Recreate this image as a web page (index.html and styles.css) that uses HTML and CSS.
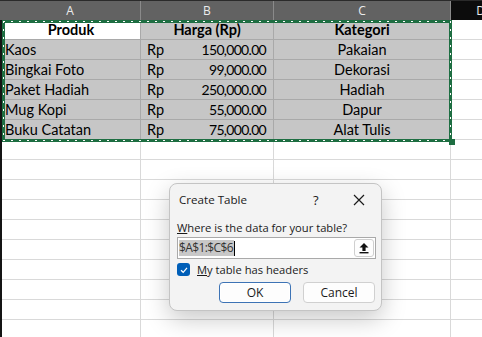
FILE: index.html
```html
<!DOCTYPE html>
<html>
<head>
	<title>Create Table</title>
	<link rel="stylesheet" href="styles.css">
</head>
<body>
	<div class="sheet">
		<div class="cols">
			<div class="colhead a">A</div>
			<div class="colhead b">B</div>
			<div class="colhead c">C</div>
			<div class="colhead d">D</div>
		</div>

		<div class="row">
			<div class="cell a active bold center">Produk</div>
			<div class="cell b sel bold center">Harga (Rp)</div>
			<div class="cell c sel bold center">Kategori</div>
			<div class="cell d"></div>
		</div>
		<div class="row">
			<div class="cell a sel">Kaos</div>
			<div class="cell b sel money"><span>Rp</span><span class="num">150,000.00</span></div>
			<div class="cell c sel center">Pakaian</div>
			<div class="cell d"></div>
		</div>
		<div class="row">
			<div class="cell a sel">Bingkai Foto</div>
			<div class="cell b sel money"><span>Rp</span><span class="num">99,000.00</span></div>
			<div class="cell c sel center">Dekorasi</div>
			<div class="cell d"></div>
		</div>
		<div class="row">
			<div class="cell a sel">Paket Hadiah</div>
			<div class="cell b sel money"><span>Rp</span><span class="num">250,000.00</span></div>
			<div class="cell c sel center">Hadiah</div>
			<div class="cell d"></div>
		</div>
		<div class="row">
			<div class="cell a sel">Mug Kopi</div>
			<div class="cell b sel money"><span>Rp</span><span class="num">55,000.00</span></div>
			<div class="cell c sel center">Dapur</div>
			<div class="cell d"></div>
		</div>
		<div class="row">
			<div class="cell a sel">Buku Catatan</div>
			<div class="cell b sel money"><span>Rp</span><span class="num">75,000.00</span></div>
			<div class="cell c sel center">Alat Tulis</div>
			<div class="cell d"></div>
		</div>

		<div class="row"><div class="cell a"></div><div class="cell b"></div><div class="cell c"></div><div class="cell d"></div></div>
		<div class="row"><div class="cell a"></div><div class="cell b"></div><div class="cell c"></div><div class="cell d"></div></div>
		<div class="row"><div class="cell a"></div><div class="cell b"></div><div class="cell c"></div><div class="cell d"></div></div>
		<div class="row"><div class="cell a"></div><div class="cell b"></div><div class="cell c"></div><div class="cell d"></div></div>
		<div class="row"><div class="cell a"></div><div class="cell b"></div><div class="cell c"></div><div class="cell d"></div></div>
		<div class="row"><div class="cell a"></div><div class="cell b"></div><div class="cell c"></div><div class="cell d"></div></div>
		<div class="row"><div class="cell a"></div><div class="cell b"></div><div class="cell c"></div><div class="cell d"></div></div>
		<div class="row"><div class="cell a"></div><div class="cell b"></div><div class="cell c"></div><div class="cell d"></div></div>
		<div class="row"><div class="cell a"></div><div class="cell b"></div><div class="cell c"></div><div class="cell d"></div></div>
		<div class="row"><div class="cell a"></div><div class="cell b"></div><div class="cell c"></div><div class="cell d"></div></div>

		<!-- copy marquee around A1:C6 -->
		<div class="marquee"><div class="handle"></div></div>

		<div class="dialog">
			<div class="dlg-title">
				<span class="dlg-name">Create Table</span>
				<span class="dlg-help">?</span>
				<svg class="dlg-close" width="12" height="12" viewBox="0 0 12 12">
					<path d="M1 1 L11 11 M11 1 L1 11" stroke="#1a1a1a" stroke-width="1.2" fill="none"/>
				</svg>
			</div>
			<div class="dlg-body">
				<div class="dlg-label"><u>W</u>here is the data for your table?</div>
				<div class="range">
					<div class="range-text"><span class="hl">$A$1:$C$6</span><span class="caret"></span></div>
					<div class="range-btn">
						<svg width="12" height="12" viewBox="0 0 12 12">
							<path d="M6 1 L10.5 5.5 L7.6 5.5 L7.6 9 L4.4 9 L4.4 5.5 L1.5 5.5 Z" fill="#111"/>
							<rect x="1.5" y="10" width="9" height="1.4" fill="#111"/>
						</svg>
					</div>
				</div>
				<div class="check-row">
					<span class="check">
						<svg width="10" height="10" viewBox="0 0 10 10">
							<path d="M2 5.2 L4.2 7.3 L8 2.8" stroke="#fff" stroke-width="1.2" fill="none"/>
						</svg>
					</span>
					<span><u>M</u>y table has headers</span>
				</div>
				<div class="buttons">
					<div class="btn ok">OK</div>
					<div class="btn">Cancel</div>
				</div>
			</div>
		</div>
	</div>
</body>
</html>
```

FILE: styles.css
```css
/* Spreadsheet in dark chrome with a Create Table dialog on top */
body {
	margin: 0;
	background: #ffffff;
	font-family: Lato, "Liberation Sans", sans-serif;
	overflow: hidden;
}

.sheet {
	position: relative;
	width: 482px;
	height: 337px;
}

.cols {
	display: flex;
	height: 20px;
	border-top: 1px solid #2a2a2a;
	box-sizing: border-box;
}

.colhead {
	display: flex;
	align-items: center;
	justify-content: center;
	background: #626262;
	color: #ececec;
	font-family: "Open Sans", "Liberation Sans", sans-serif;
	font-size: 12px;
	border-right: 1px solid #8a8a8a;
	box-sizing: border-box;
}

.colhead.a { width: 141px; }

.colhead.d {
	background: #0c0c0c;
	border-right: none;
	justify-content: flex-end;
	padding-right: 0;
	margin-right: -3px;
}

.a { width: 139px; flex: none; }
.b { width: 133px; flex: none; }
.c { width: 177px; flex: none; }
.d { flex: 1; }

.row {
	display: flex;
	height: 20px;
	border-left: 2px solid #141414;
}

.cell {
	height: 20px;
	box-sizing: border-box;
	border-right: 1px solid #d9d9d9;
	border-bottom: 1px solid #d9d9d9;
	font-size: 14.5px;
	line-height: 20px;
	padding: 0 3px;
	color: #000;
	white-space: nowrap;
	overflow: hidden;
}

.cell.d {
	border-right: none;
}

.cell.sel {
	background: #c6c6c6;
	border-color: #a9a9a9;
}

.cell.active {
	background: #ffffff;
	border-right-color: #a9a9a9;
	border-bottom-color: #a9a9a9;
}

.bold { font-weight: bold; }
.center { text-align: center; }

.money {
	display: flex;
	justify-content: space-between;
	padding: 0 7px 0 6px;
}

.num {
	font-size: 14px;
	letter-spacing: -0.7px;
}

.marquee {
	position: absolute;
	left: 2px;
	top: 20px;
	width: 450px;
	height: 122px;
	border: 3px solid #1e6e42;
	box-sizing: border-box;
}

.marquee::after {
	content: "";
	position: absolute;
	inset: -2px;
	background:
		repeating-linear-gradient(90deg, #ffffff 0 2px, transparent 2px 8px) top left / 100% 1px no-repeat,
		repeating-linear-gradient(90deg, #ffffff 0 2px, transparent 2px 8px) bottom left / 100% 1px no-repeat,
		repeating-linear-gradient(180deg, #ffffff 0 2px, transparent 2px 8px) top left / 1px 100% no-repeat,
		repeating-linear-gradient(180deg, #ffffff 0 2px, transparent 2px 8px) top right / 1px 100% no-repeat;
}

.handle {
	position: absolute;
	right: -6px;
	bottom: -6px;
	width: 6px;
	height: 6px;
	background: #1e6e42;
	z-index: 1;
}

/* dialog */
.dialog {
	position: absolute;
	left: 169px;
	top: 183px;
	width: 213px;
	height: 128px;
	background: #f3f3f3;
	border: 1px solid #c4c4c4;
	border-radius: 8px;
	box-sizing: border-box;
	box-shadow: 0 8px 24px rgba(0, 0, 0, 0.22);
	font-family: "Open Sans", "Noto Sans", sans-serif;
	font-size: 11.2px;
	color: #1a1a1a;
}

.dlg-title {
	display: flex;
	align-items: center;
	height: 31px;
	padding: 0 0 0 9px;
	font-size: 11.6px;
}

.dlg-name { flex: 1; }

.dlg-help {
	width: 31px;
	font-size: 13px;
}

.dlg-close {
	margin: 0 16px 0 9px;
}

.dlg-body {
	padding: 5px 5px 0 7px;
}

.dlg-label {
	height: 15px;
	line-height: 15px;
}

.range {
	display: flex;
	align-items: center;
	height: 22px;
	margin-top: 2px;
	background: #ffffff;
	border: 1px solid #a9a9a9;
	box-sizing: border-box;
}

.range-text {
	flex: 1;
	display: flex;
	align-items: center;
	padding-left: 1px;
}

.hl {
	background: #c8c8c8;
	color: #333;
	font-size: 12px;
	letter-spacing: -0.6px;
	line-height: 16px;
	padding-right: 1px;
}

.caret {
	width: 1px;
	height: 15px;
	background: #000;
}

.range-btn {
	display: flex;
	align-items: center;
	justify-content: center;
	width: 20px;
	height: 18px;
	margin-right: 1px;
	border: 1px solid #cfcfcf;
	border-radius: 3px;
	background: #fdfdfd;
	box-sizing: border-box;
}

.check-row {
	display: flex;
	align-items: center;
	gap: 7px;
	height: 15px;
	margin-top: 3px;
}

.check {
	display: flex;
	align-items: center;
	justify-content: center;
	width: 13px;
	height: 13px;
	border-radius: 3px;
	background: #005fb8;
}

.buttons {
	display: flex;
	justify-content: flex-end;
	gap: 12px;
	margin-top: 5px;
	padding-right: 1px;
}

.btn {
	width: 72px;
	height: 21px;
	line-height: 19px;
	text-align: center;
	background: #fdfdfd;
	border: 1px solid #d0d0d0;
	border-radius: 4px;
	box-sizing: border-box;
	font-size: 12px;
}

.btn.ok {
	border: 1px solid #3d73b5;
	box-shadow: inset 0 0 0 1px #ffffff;
}
```
